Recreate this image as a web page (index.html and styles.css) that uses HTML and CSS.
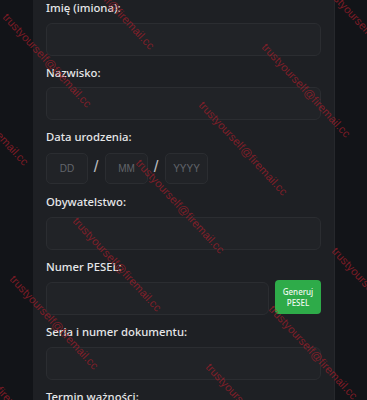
FILE: index.html
```html
<!DOCTYPE html>
<html lang="pl">
<head>
<meta charset="utf-8">
<title>Formularz</title>
<link rel="stylesheet" href="styles.css">
</head>
<body>
<div class="page">
  <form class="card">
    <div class="group">
      <label class="label">Imię (imiona):</label>
      <div class="input"></div>
    </div>
    <div class="group">
      <label class="label">Nazwisko:</label>
      <div class="input"></div>
    </div>
    <div class="group">
      <label class="label">Data urodzenia:</label>
      <div class="date-row">
        <div class="date-box dd">DD</div>
        <span class="slash">/</span>
        <div class="date-box">MM</div>
        <span class="slash">/</span>
        <div class="date-box">YYYY</div>
      </div>
    </div>
    <div class="group">
      <label class="label">Obywatelstwo:</label>
      <div class="input"></div>
    </div>
    <div class="group">
      <label class="label">Numer PESEL:</label>
      <div class="pesel-row">
        <div class="input grow"></div>
        <button type="button" class="btn">Generuj<br>PESEL</button>
      </div>
    </div>
    <div class="group">
      <label class="label">Seria i numer dokumentu:</label>
      <div class="input"></div>
    </div>
    <div class="group">
      <label class="label">Termin ważności:</label>
      <div class="input"></div>
    </div>
  </form>
</div>
<div class="watermarks">
  <span class="wm" style="left:68px;top:-49px">trustyourself@firemail.cc</span>
  <span class="wm" style="left:5px;top:9px">trustyourself@firemail.cc</span>
  <span class="wm" style="left:-58px;top:67px">trustyourself@firemail.cc</span>
  <span class="wm" style="left:327px;top:-19px">trustyourself@firemail.cc</span>
  <span class="wm" style="left:264px;top:39px">trustyourself@firemail.cc</span>
  <span class="wm" style="left:201px;top:97px">trustyourself@firemail.cc</span>
  <span class="wm" style="left:138px;top:155px">trustyourself@firemail.cc</span>
  <span class="wm" style="left:75px;top:213px">trustyourself@firemail.cc</span>
  <span class="wm" style="left:12px;top:271px">trustyourself@firemail.cc</span>
  <span class="wm" style="left:-51px;top:329px">trustyourself@firemail.cc</span>
  <span class="wm" style="left:334px;top:243px">trustyourself@firemail.cc</span>
  <span class="wm" style="left:271px;top:301px">trustyourself@firemail.cc</span>
  <span class="wm" style="left:208px;top:359px">trustyourself@firemail.cc</span>
</div>
</body>
</html>
```
FILE: styles.css
```css
html, body {
  margin: 0;
  padding: 0;
  background: #121418;
  height: 100%;
  overflow: hidden;
}
body {
  font-family: "Noto Sans", "DejaVu Sans", sans-serif;
  color: #e4e5e7;
}
.page {
  padding-left: 33px;
}
.card {
  width: 302px;
  box-sizing: border-box;
  background: #1e2024;
  border-right: 1px solid #26282c;
  padding: 0 13px 40px 13px;
  display: flex;
  flex-direction: column;
}
.group {
  display: flex;
  flex-direction: column;
  margin-bottom: 9px;
}
.label {
  font-size: 11.3px;
  font-weight: 500;
  line-height: 16px;
  height: 16px;
  margin-bottom: 6.67px;
  color: #e6e7e9;
}
.input {
  height: 33px;
  box-sizing: border-box;
  border: 1px solid #2b2d31;
  border-radius: 6px;
  background: #212327;
}
.date-row {
  height: 33px;
  display: flex;
  align-items: center;
}
.date-box {
  width: 43px;
  height: 31px;
  box-sizing: border-box;
  border: 1px solid #2b2d31;
  border-radius: 5px;
  background: #212327;
  display: flex;
  align-items: center;
  justify-content: center;
  font-family: "Liberation Sans", Arial, sans-serif;
  font-size: 10px;
  color: #62656b;
}
.dd {
  width: 42px;
}
.slash {
  width: 6px;
  margin: -3px 6px 0 5px;
  text-align: center;
  font-family: "Liberation Sans", Arial, sans-serif;
  font-size: 17px;
  color: #b8babe;
  line-height: 20px;
}
.pesel-row {
  display: flex;
  align-items: center;
  gap: 6px;
}
.grow {
  flex: 1;
  margin-top: 1px;
}
.btn {
  width: 46px;
  height: 34px;
  border: none;
  border-radius: 4px;
  background: #2eab49;
  color: #eef8f0;
  font-family: "Noto Sans", "DejaVu Sans", sans-serif;
  font-size: 8px;
  font-weight: 500;
  line-height: 11px;
  padding: 0;
  margin-top: -2px;
  text-align: center;
}
.watermarks {
  position: absolute;
  left: 0;
  top: 0;
  width: 367px;
  height: 400px;
  overflow: hidden;
  pointer-events: none;
}
.wm {
  position: absolute;
  font-family: "Liberation Sans", Arial, sans-serif;
  font-size: 11.3px;
  line-height: 12px;
  white-space: nowrap;
  color: rgba(160, 30, 42, 0.75);
  transform-origin: 0 50%;
  transform: rotate(47deg);
}
```
